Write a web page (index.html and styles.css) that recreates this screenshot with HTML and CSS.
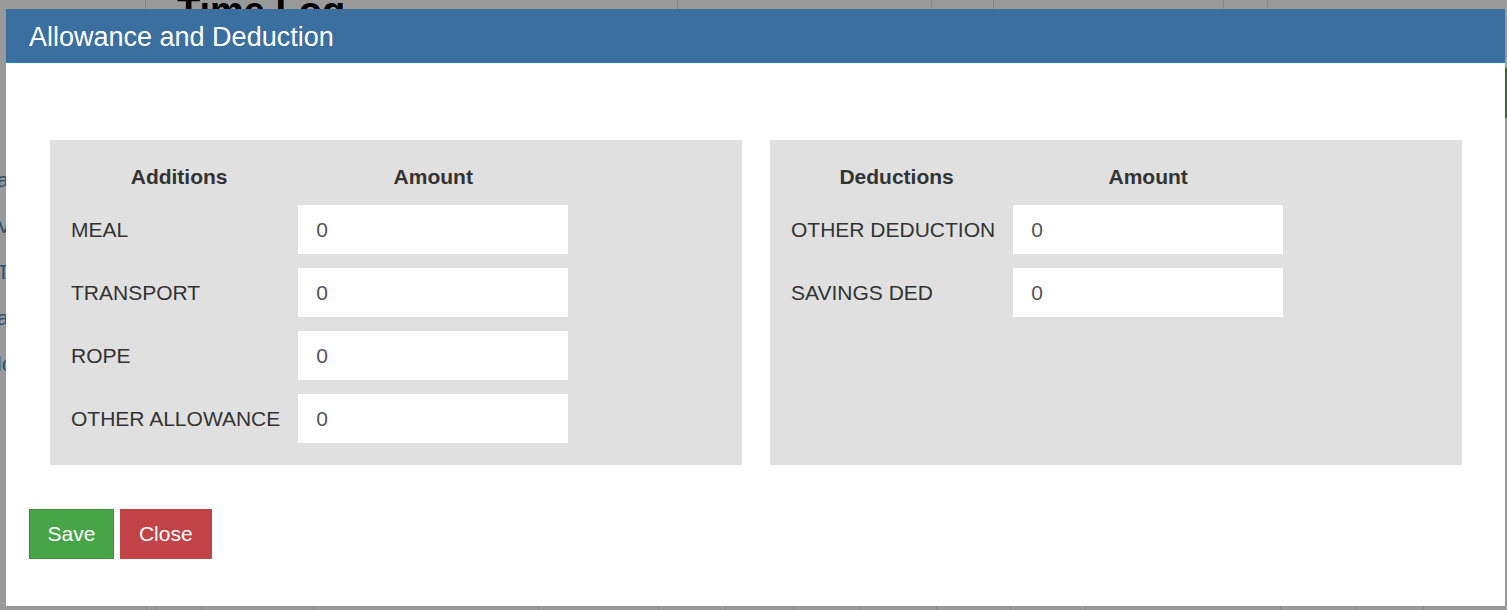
FILE: index.html
```html
<!DOCTYPE html>
<html lang="en">
<head>
  <meta charset="UTF-8" />
  <meta name="viewport" content="width=device-width, initial-scale=1.0">
  <title>Time Log</title>
  <link rel="stylesheet" href="styles.css">
</head>
<body>
  <div class="page">
    <div class="strip top-strip">
      <div class="cell w146"></div>
      <div class="cell w532"><h1 class="page-title">Time Log</h1></div>
      <div class="cell w254"></div>
      <div class="cell w62"></div>
      <div class="cell w230"></div>
      <div class="cell w44"></div>
      <div class="cell grow"></div>
    </div>

    <div class="page-body">
      <aside class="sidebar">
        <a href="#">attendance</a>
        <a href="#">Vacation</a>
        <a href="#">Timesheet</a>
        <a href="#">approvals</a>
        <a href="#">logs</a>
      </aside>
      <main class="main">
        <div class="toolbar">
          <button class="btn-edge">Add</button>
        </div>
      </main>
    </div>

    <div class="strip bottom-strip">
      <div class="cell b147"></div>
      <div class="cell b10"></div>
      <div class="cell b45"></div>
      <div class="cell b112"></div>
      <div class="cell b225"></div>
      <div class="cell b120"></div>
      <div class="cell b67"></div>
      <div class="cell b68"></div>
      <div class="cell b67"></div>
      <div class="cell b76"></div>
      <div class="cell b74"></div>
      <div class="cell b75"></div>
      <div class="cell b195"></div>
      <div class="cell b76"></div>
      <div class="cell b67"></div>
      <div class="cell grow"></div>
    </div>
  </div>

  <div class="overlay"></div>

  <div class="modal">
    <div class="modal-header">Allowance and Deduction</div>
    <div class="modal-body">
      <div class="panel">
        <table class="amounts">
          <tr>
            <th>Additions</th>
            <th>Amount</th>
          </tr>
          <tr>
            <td class="label">MEAL</td>
            <td><input type="text" value="0"></td>
          </tr>
          <tr>
            <td class="label">TRANSPORT</td>
            <td><input type="text" value="0"></td>
          </tr>
          <tr>
            <td class="label">ROPE</td>
            <td><input type="text" value="0"></td>
          </tr>
          <tr>
            <td class="label">OTHER ALLOWANCE</td>
            <td><input type="text" value="0"></td>
          </tr>
        </table>
      </div>
      <div class="panel">
        <table class="amounts">
          <tr>
            <th>Deductions</th>
            <th>Amount</th>
          </tr>
          <tr>
            <td class="label">OTHER DEDUCTION</td>
            <td><input type="text" value="0"></td>
          </tr>
          <tr>
            <td class="label">SAVINGS DED</td>
            <td><input type="text" value="0"></td>
          </tr>
        </table>
      </div>
    </div>
    <div class="modal-footer">
      <button class="btn btn-save">Save</button>
      <button class="btn btn-close">Close</button>
    </div>
  </div>
</body>
</html>
```

FILE: styles.css
```css
html, body {
  margin: 0;
  padding: 0;
  height: 100%;
  overflow: hidden;
  background: #fff;
  font-family: 'Liberation Sans', Arial, sans-serif;
}

/* page behind the dialog */
.page {
  height: 100vh;
  display: flex;
  flex-direction: column;
  overflow: hidden;
}
.strip {
  display: flex;
  flex-shrink: 0;
}
.top-strip {
  height: 40px;
}
.bottom-strip {
  height: 20px;
  margin-top: auto;
}
.cell {
  box-sizing: border-box;
  border-right: 1px solid #dedede;
  flex-shrink: 0;
}
.cell.grow {
  flex: 1;
  border-right: none;
}
.w146 { width: 146px; }
.w532 { width: 532px; }
.w254 { width: 254px; }
.w62 { width: 62px; }
.w230 { width: 230px; }
.w44 { width: 44px; }
.b147 { width: 147px; }
.b10 { width: 10px; }
.b45 { width: 45px; }
.b112 { width: 112px; }
.b225 { width: 225px; }
.b120 { width: 120px; }
.b67 { width: 67px; }
.b68 { width: 68px; }
.b76 { width: 76px; }
.b74 { width: 74px; }
.b75 { width: 75px; }
.b195 { width: 195px; }

.page-title {
  margin: -8px 0 0 31px;
  font-size: 38px;
  line-height: 1;
  font-weight: bold;
  color: #000;
}
.page-body {
  display: flex;
  flex: 1;
}
.sidebar {
  width: 140px;
  padding-top: 117px;
  display: flex;
  flex-direction: column;
}
.sidebar a {
  margin-left: -3px;
  font-size: 21px;
  line-height: 46px;
  color: #4a86bd;
  text-decoration: none;
}
.main {
  flex: 1;
}
.toolbar {
  display: flex;
  justify-content: flex-end;
  padding-top: 28px;
  margin-right: -70px;
}
.btn-edge {
  width: 72px;
  height: 50px;
  border: none;
  background: #65ad55;
  color: #fff;
}

.overlay {
  position: fixed;
  inset: 0;
  background: rgba(0,0,0,0.4);
}

/* dialog */
.modal {
  position: fixed;
  top: 9px;
  left: 6px;
  width: 1499px;
  height: 597px;
  background: #fff;
  display: flex;
  flex-direction: column;
}
.modal-header {
  height: 54px;
  box-sizing: border-box;
  padding: 4px 0 0 23px;
  background: #3b6f9f;
  border-bottom: 1px solid #1a86a8;
  color: #fff;
  font-size: 27px;
  display: flex;
  align-items: center;
  flex-shrink: 0;
}
.modal-body {
  display: grid;
  grid-template-columns: 692px 692px;
  gap: 28px;
  padding: 77px 0 0 44px;
}
.panel {
  background: #e0e0e0;
  padding: 12px 10px 15px 10px;
}
.amounts {
  border-collapse: collapse;
  border-spacing: 0;
  font-size: 21px;
  color: #333;
}
.amounts th {
  height: 42px;
  padding: 4px 0 0;
  text-align: center;
  font-weight: bold;
  vertical-align: middle;
}
.amounts td {
  padding: 7px 0;
  vertical-align: middle;
}
.amounts td.label {
  padding: 7px 18px 7px 11px;
  white-space: nowrap;
}
.amounts input {
  display: block;
  width: 270px;
  height: 49px;
  box-sizing: border-box;
  border: none;
  padding: 0 18px;
  background: #fff;
  font-family: 'Liberation Sans', Arial, sans-serif;
  font-size: 21px;
  color: #555;
}
.modal-footer {
  display: flex;
  gap: 6px;
  padding: 44px 0 0 23px;
}
.btn {
  height: 50px;
  padding: 0 18px;
  border: 1px solid transparent;
  font-family: 'Liberation Sans', Arial, sans-serif;
  font-size: 21px;
  color: #fff;
  cursor: pointer;
}
.btn-save {
  padding: 0 17.5px;
  background: #47a447;
  border-color: #3d8f3d;
}
.btn-close {
  background: #c14247;
  border-color: #c14247;
}
```
